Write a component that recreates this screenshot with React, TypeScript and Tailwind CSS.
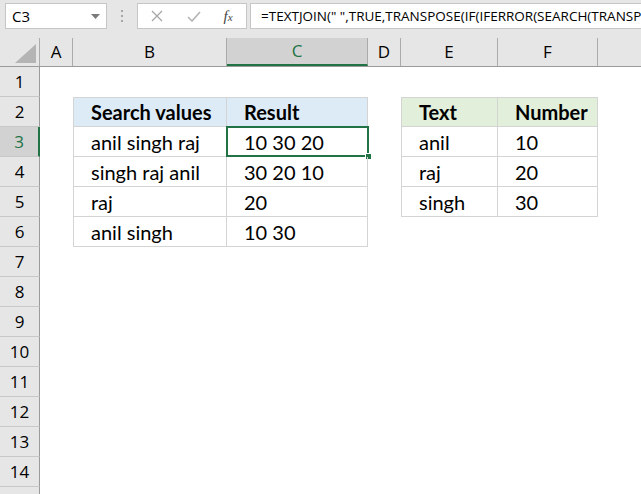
import React from 'react';

const COLS = [
  { key: 'A', w: 'w-[33px]' },
  { key: 'B', w: 'w-[154px]' },
  { key: 'C', w: 'w-[141px]' },
  { key: 'D', w: 'w-[33px]' },
  { key: 'E', w: 'w-[97px]' },
  { key: 'F', w: 'w-[100px]' },
  { key: 'G', w: 'w-[43px]' },
];

type Cell = { text: string; bold?: boolean };

const DATA: Record<number, Record<string, Cell>> = {
  2: {
    B: { text: 'Search values', bold: true },
    C: { text: 'Result', bold: true },
    E: { text: 'Text', bold: true },
    F: { text: 'Number', bold: true },
  },
  3: { B: { text: 'anil singh raj' }, C: { text: '10 30 20' }, E: { text: 'anil' }, F: { text: '10' } },
  4: { B: { text: 'singh raj anil' }, C: { text: '30 20 10' }, E: { text: 'raj' }, F: { text: '20' } },
  5: { B: { text: 'raj' }, C: { text: '20' }, E: { text: 'singh' }, F: { text: '30' } },
  6: { B: { text: 'anil singh' }, C: { text: '10 30' } },
};

const inTable = (row: number, col: string) => {
  if ((col === 'B' || col === 'C') && row >= 2 && row <= 6) return true;
  if ((col === 'E' || col === 'F') && row >= 2 && row <= 5) return true;
  return false;
};

const headerFill = (row: number, col: string) => {
  if (row !== 2) return '';
  if (col === 'B' || col === 'C') return 'bg-[#ddebf7]';
  if (col === 'E' || col === 'F') return 'bg-[#e2efda]';
  return '';
};

const ROWS = Array.from({ length: 15 }, (_, i) => i + 1);

const uiFont = { fontFamily: '"Open Sans", "DejaVu Sans", sans-serif' };
const cellFont = { fontFamily: 'Lato, "Liberation Sans", sans-serif' };

export default function App() {
  return (
    <div className="w-[641px] h-[494px] overflow-hidden bg-white" style={uiFont}>
      {/* formula bar */}
      <div className="h-[38px] bg-[#e6e6e6] flex items-start pt-[3px]">
        <div className="ml-[5px] w-[102px] h-[26px] bg-white border border-[#c6c6c6] flex items-center justify-between pl-[6px] pr-[6px]">
          <span className="text-[15px] text-black">C3</span>
          <svg width="9" height="5" viewBox="0 0 9 5">
            <path d="M0 0h9L4.5 5z" fill="#7a7a7a" />
          </svg>
        </div>
        <div className="w-[30px] h-[26px] flex flex-col items-center justify-center gap-[3px]">
          <span className="w-[2px] h-[2px] bg-[#a6a6a6]" />
          <span className="w-[2px] h-[2px] bg-[#a6a6a6]" />
          <span className="w-[2px] h-[2px] bg-[#a6a6a6]" />
        </div>
        <div className="w-[110px] h-[26px] bg-white border border-[#c6c6c6] flex items-center">
          <div className="w-[38px] flex justify-center">
            <svg width="12" height="12" viewBox="0 0 12 12">
              <path d="M1 1l10 10M11 1L1 11" stroke="#a6a6a6" strokeWidth="1.3" />
            </svg>
          </div>
          <div className="w-[36px] flex justify-center">
            <svg width="14" height="11" viewBox="0 0 14 11">
              <path d="M1 6l4 4 8-9" stroke="#b4b4b4" strokeWidth="1.6" fill="none" />
            </svg>
          </div>
          <div className="flex-1 flex justify-center pr-[2px]">
            <span className="text-[15px] italic text-[#444]" style={{ fontFamily: '"Liberation Serif", serif' }}>
              f<span className="text-[11px]">x</span>
            </span>
          </div>
        </div>
        <div className="ml-[3px] flex-1 h-[26px] bg-white border-l border-y border-[#c6c6c6] flex items-center pl-[10px] overflow-hidden whitespace-nowrap">
          <span className="text-[13.5px] text-black">=TEXTJOIN(" ",TRUE,TRANSPOSE(IF(IFERROR(SEARCH(TRANSPOSE(D3:D5),B3),0),E3:E5,""))))</span>
        </div>
      </div>

      {/* column headers */}
      <div className="h-[29px] flex bg-[#e6e6e6] border-b border-[#9b9b9b]">
        <div className="w-[40px] h-full border-r border-[#ababab] flex items-end justify-end pr-[3px] pb-[3px]">
          <svg width="21" height="19" viewBox="0 0 21 19">
            <path d="M21 0V19H0z" fill="#b4b4b4" />
          </svg>
        </div>
        {COLS.map((c) => {
          const sel = c.key === 'C';
          return (
            <div
              key={c.key}
              className={`${c.w} h-full flex items-center justify-center text-[17px] ${
                sel
                  ? 'bg-[#d2d2d2] text-[#217346] border-b-2 border-b-[#217346] border-r border-r-[#ababab]'
                  : 'text-black border-r border-[#ababab]'
              } ${c.key === 'G' ? 'border-r-0' : ''}`}
            >
              {c.key === 'G' ? '' : c.key}
            </div>
          );
        })}
      </div>

      {/* rows */}
      {ROWS.map((r) => (
        <div key={r} className="h-[30px] flex">
          <div
            className={`w-[40px] h-full flex items-center justify-center text-[17px] border-b border-[#c8c8c8] ${
              r === 3
                ? 'bg-[#d2d2d2] text-[#217346] border-r-2 border-r-[#217346]'
                : 'bg-[#e6e6e6] text-black border-r border-r-[#9b9b9b]'
            }`}
          >
            {r < 15 ? r : ''}
          </div>
          {COLS.map((c) => {
            const cell = DATA[r]?.[c.key];
            const t = inTable(r, c.key);
            const border = t
              ? `border-r border-b border-[#d4d4d4] ${r === 2 ? 'border-t' : ''} ${
                  c.key === 'B' || c.key === 'E' ? 'border-l' : ''
                }`
              : '';
            const isActive = r === 3 && c.key === 'C';
            return (
              <div
                key={c.key}
                className={`${c.w} h-full relative flex items-center pl-[17px] text-[20px] text-black ${border} ${headerFill(
                  r,
                  c.key
                )} ${cell?.bold ? 'font-bold' : ''}`}
                style={cellFont}
              >
                {cell?.text}
                {isActive && (
                  <>
                    <div className="absolute left-[-1px] top-[-1px] right-[-2px] bottom-[-1px] border-2 border-[#217346]" />
                    <div className="absolute right-[-5px] bottom-[-4px] w-[7px] h-[7px] bg-[#217346] border border-white" />
                  </>
                )}
              </div>
            );
          })}
        </div>
      ))}
    </div>
  );
}
